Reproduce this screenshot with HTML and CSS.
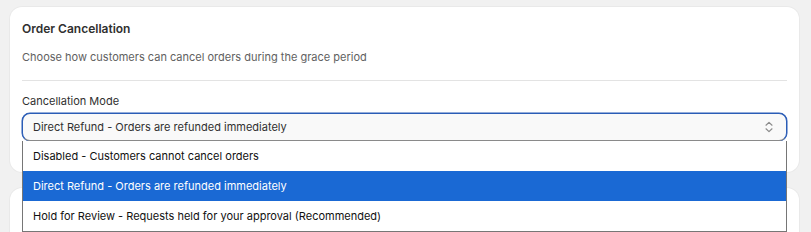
FILE: index.html
```html
<!DOCTYPE html>
<html>
<head>
<meta charset="utf-8">
<link rel="stylesheet" href="styles.css">
</head>
<body>
<div class="page">
  <section class="card">
    <h2 class="title">Order Cancellation</h2>
    <p class="desc">Choose how customers can cancel orders during the grace period</p>
    <hr class="divider">
    <label class="label">Cancellation Mode</label>
    <div class="select-wrap">
      <div class="select">
        <span class="select-value">Direct Refund - Orders are refunded immediately</span>
        <svg class="chev" width="10" height="14" viewBox="0 0 10 14" fill="none" stroke="#8a8a8a" stroke-width="1.2" stroke-linecap="round" stroke-linejoin="round"><path d="M2 5.2 L5 2.4 L8 5.2"/><path d="M2 8.8 L5 11.6 L8 8.8"/></svg>
      </div>
      <ul class="menu">
        <li class="opt">Disabled - Customers cannot cancel orders</li>
        <li class="opt active">Direct Refund - Orders are refunded immediately</li>
        <li class="opt">Hold for Review - Requests held for your approval (Recommended)</li>
      </ul>
    </div>
  </section>
  <section class="card card2"></section>
</div>
</body>
</html>
```
FILE: styles.css
```css
* { box-sizing: border-box; }
html, body { margin: 0; height: 100%; overflow: hidden; }
body {
  background: #f1f1f1;
  font-family: Inter, "Noto Sans", sans-serif;
  color: #303030;
}
.page {
  padding: 7px 12px 0 10px;
  display: flex;
  flex-direction: column;
  gap: 16px;
}
.card {
  background: #fff;
  border-radius: 12px;
  padding: 12px 12px 31px 12px;
  box-shadow: 0 0 0 1px rgba(0,0,0,0.03);
}
.card2 { height: 60px; padding: 0; }
.title {
  margin: 0;
  font-size: 12px;
  line-height: 20px;
  font-weight: 600;
  color: #303030;
}
.desc {
  margin: 8px 0 0;
  font-size: 11px;
  line-height: 20px;
  color: #616161;
}
.divider {
  margin: 13px 0 0;
  border: 0;
  border-top: 1px solid #e3e3e3;
}
.label {
  display: block;
  margin-top: 11px;
  font-size: 11px;
  line-height: 18px;
  color: #303030;
}
.select-wrap {
  position: relative;
  margin-top: 3px;
}
.select {
  height: 28px;
  display: flex;
  align-items: center;
  justify-content: space-between;
  padding: 0 12px 0 10px;
  background: #f9f9f9;
  border: 1px solid #2a5cb6;
  border-bottom-color: #8a8a8a;
  border-radius: 8px;
  box-shadow: 0 0 0 0.5px #2a5cb6;
  font-size: 11px;
  color: #303030;
}
.chev { display: block; }
.menu {
  position: absolute;
  top: 100%;
  left: 0;
  width: 765px;
  margin: 0;
  padding: 0;
  list-style: none;
  background: #fff;
  border: 1px solid #767676;
  border-top: 0;
}
.opt {
  height: 30px;
  line-height: 30px;
  padding-left: 10px;
  font-size: 11px;
  color: #111;
}
.opt.active {
  background: #1a69d4;
  color: #fff;
}
```
